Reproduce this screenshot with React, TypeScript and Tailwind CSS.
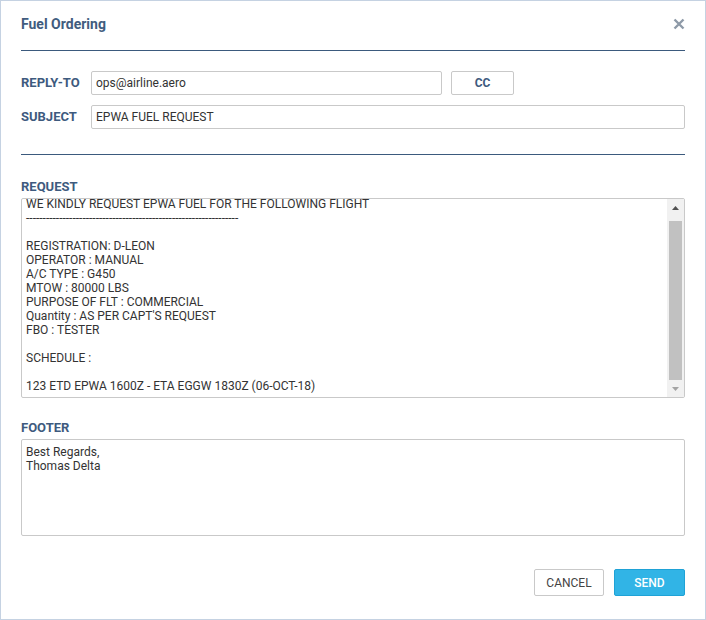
import React, { useEffect, useRef } from "react";

const requestText = `WE KINDLY REQUEST EPWA FUEL FOR THE FOLLOWING FLIGHT
----------------------------------------------------------------

REGISTRATION: D-LEON
OPERATOR : MANUAL
A/C TYPE : G450
MTOW : 80000 LBS
PURPOSE OF FLT : COMMERCIAL
Quantity : AS PER CAPT'S REQUEST
FBO : TESTER

SCHEDULE :

123 ETD EPWA 1600Z - ETA EGGW 1830Z (06-OCT-18)
`;

const labelCls = "text-[13px] font-bold text-[#3e5a7e] leading-[16px]";
const inputCls =
  "h-[24px] border border-[#c9c9c9] rounded-[2px] px-[4px] text-[12px] text-[#333] bg-white outline-none";

// classic scrollbar drawn by hand, headless chrome uses overlay bars
const FakeScrollbar = () => (
  <div className="w-[17px] bg-[#f1f1f1] flex flex-col shrink-0">
    <div className="h-[17px] flex items-center justify-center">
      <svg width="7" height="4" viewBox="0 0 7 4">
        <path d="M0 4 L3.5 0 L7 4 Z" fill="#505050" />
      </svg>
    </div>
    <div className="flex-1 px-[2px] pt-[5px]">
      <div className="h-[159px] bg-[#c1c1c1]" />
    </div>
    <div className="h-[17px] flex items-center justify-center">
      <svg width="7" height="4" viewBox="0 0 7 4">
        <path d="M0 0 L7 0 L3.5 4 Z" fill="#a3a3a3" />
      </svg>
    </div>
  </div>
);

const App = () => {
  const reqRef = useRef<HTMLTextAreaElement>(null);

  useEffect(() => {
    // the reference is scrolled a few pixels down
    if (reqRef.current) reqRef.current.scrollTop = 6;
  }, []);

  return (
    <div
      className="w-[706px] h-[620px] border border-[#c5d2e2] bg-white px-[20px] flex flex-col"
      style={{ fontFamily: "Roboto, 'Liberation Sans', sans-serif" }}
    >
      {/* header */}
      <div className="h-[50px] border-b border-[#3b5a7d] flex items-center justify-between pb-[3px]">
        <h1 className="text-[14px] font-bold text-[#415c7e]">Fuel Ordering</h1>
        <button className="w-[14px] h-[14px] mr-[-1px] flex items-center justify-center">
          <svg width="12" height="12" viewBox="0 0 12 12">
            <path
              d="M1.5 1.5 L10.5 10.5 M10.5 1.5 L1.5 10.5"
              stroke="#8e9aa8"
              strokeWidth="2.4"
              strokeLinecap="butt"
            />
          </svg>
        </button>
      </div>

      {/* reply-to / subject */}
      <div className="flex flex-col gap-[10px] pt-[20px] pb-[25px] border-b border-[#3b5a7d]">
        <div className="flex items-center">
          <label className={`${labelCls} w-[70px]`}>REPLY-TO</label>
          <input className={`${inputCls} w-[351px]`} defaultValue="ops@airline.aero" />
          <button className="ml-[9px] w-[63px] h-[24px] border border-[#c9c9c9] rounded-[2px] text-[12px] font-bold text-[#3e5a7e] bg-white">
            CC
          </button>
        </div>
        <div className="flex items-center">
          <label className={`${labelCls} w-[70px]`}>SUBJECT</label>
          <input className={`${inputCls} flex-1`} defaultValue="EPWA FUEL REQUEST" />
        </div>
      </div>

      {/* request */}
      <div className="flex flex-col pt-[24px]">
        <label className={`${labelCls} mb-[3px]`}>REQUEST</label>
        <div className="h-[200px] border border-[#c9c9c9] rounded-[2px] flex bg-white">
          <textarea
            ref={reqRef}
            readOnly
            className="flex-1 h-full px-[4px] py-[4px] text-[12px] leading-[14px] text-[#333] resize-none outline-none overflow-hidden"
            defaultValue={requestText}
          />
          <FakeScrollbar />
        </div>
      </div>

      {/* footer */}
      <div className="flex flex-col pt-[22px]">
        <label className={`${labelCls} mb-[3px]`}>FOOTER</label>
        <textarea
          readOnly
          className="h-[97px] w-full border border-[#c9c9c9] rounded-[2px] px-[4px] py-[5px] text-[12px] leading-[14px] text-[#333] resize-none outline-none"
          defaultValue={"Best Regards,\nThomas Delta"}
        />
      </div>

      {/* actions */}
      <div className="flex justify-end gap-[10px] mt-[33px]">
        <button className="w-[70px] h-[27px] border border-[#c9c9c9] rounded-[2px] bg-white text-[12px] text-[#444]">
          CANCEL
        </button>
        <button className="w-[71px] h-[27px] border border-[#1fa2d6] rounded-[2px] bg-[#31b4e6] text-[12px] font-medium text-white">
          SEND
        </button>
      </div>
    </div>
  );
};

export default App;
